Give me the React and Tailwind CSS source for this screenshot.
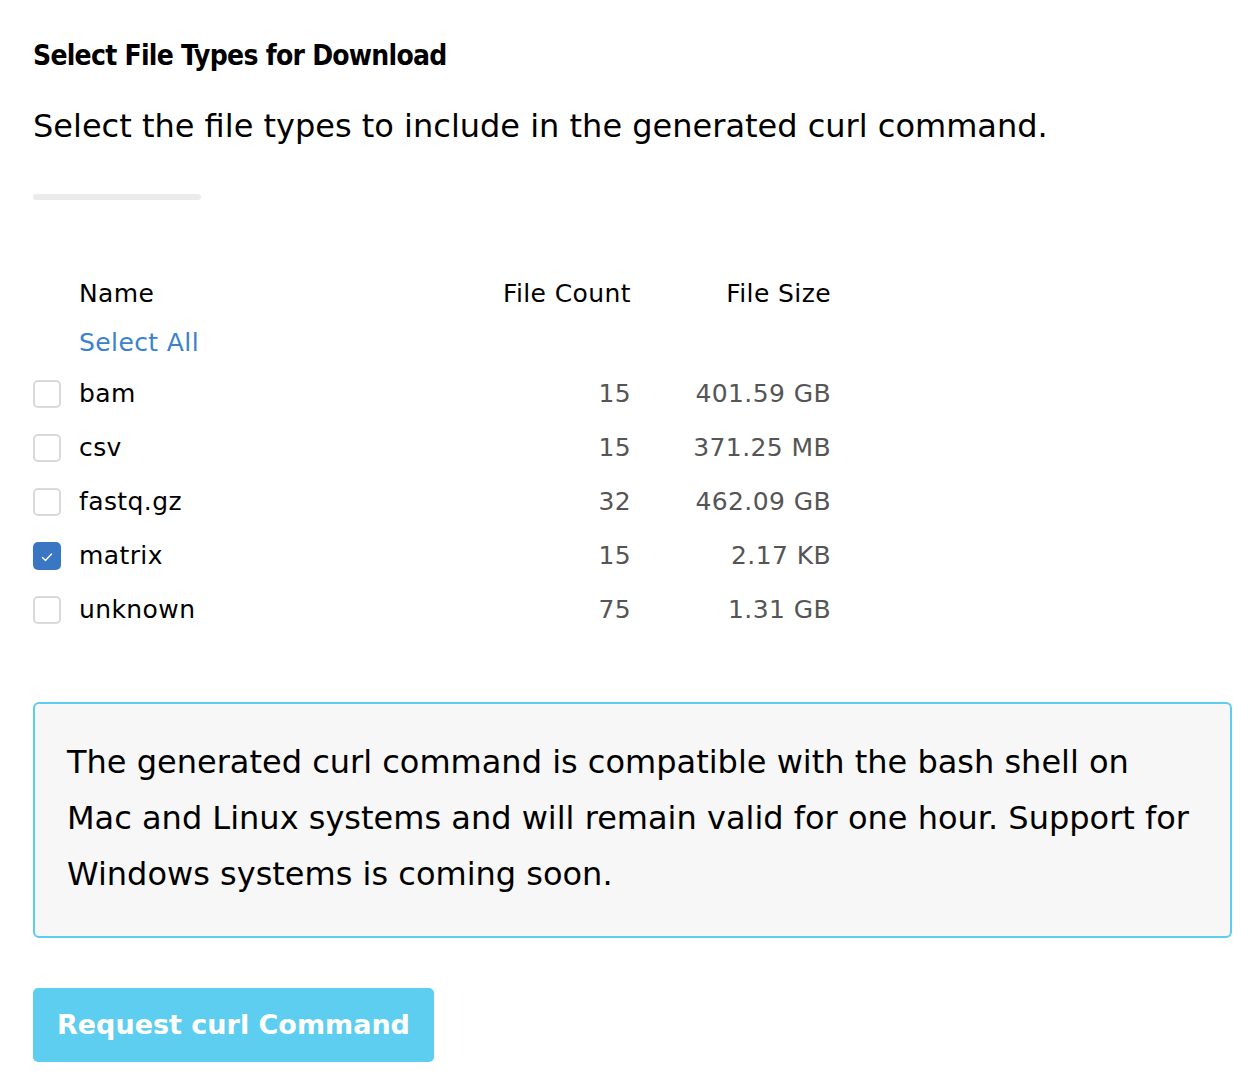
import React from 'react';

const rows = [
  { name: 'bam', count: 15, size: '401.59 GB', checked: false },
  { name: 'csv', count: 15, size: '371.25 MB', checked: false },
  { name: 'fastq.gz', count: 32, size: '462.09 GB', checked: false },
  { name: 'matrix', count: 15, size: '2.17 KB', checked: true },
  { name: 'unknown', count: 75, size: '1.31 GB', checked: false },
];

const Checkbox = ({ checked }) =>
  checked ? (
    <span className="flex h-[28px] w-[28px] items-center justify-center rounded-[5px] bg-[#3a77c2]">
      <svg width="18" height="18" viewBox="0 0 18 18" fill="none">
        <path d="M4.5 10.5l3 3L13.5 7" stroke="#fff" strokeWidth="1.4" strokeLinecap="round" strokeLinejoin="round" />
      </svg>
    </span>
  ) : (
    <span className="block h-[28px] w-[28px] rounded-[5px] border-2 border-[#d9d9d9] bg-white" />
  );

export default function App() {
  return (
    <div className="min-h-screen bg-white pl-[33px] pr-[16px] pt-[36px] font-['DejaVu_Sans',sans-serif] text-black">
      <h1 className="font-['DejaVu_Sans_Condensed',sans-serif] text-[28px] font-bold leading-[40px] tracking-[-0.75px]">
        Select File Types for Download
      </h1>
      <p className="mt-[30px] text-[32px] leading-[40px]">
        Select the file types to include in the generated curl command.
      </p>
      <div className="mt-[48px] h-[6px] w-[168px] rounded-full bg-[#ebebeb]" />

      <div className="mt-[69px] w-[798px] text-[25px] tracking-[0.4px]">
        <div className="grid h-[50px] grid-cols-[46px_1fr_170px_200px] items-center">
          <span />
          <span>Name</span>
          <span className="text-right">File Count</span>
          <span className="text-right">File Size</span>
        </div>
        <div className="grid h-[48px] grid-cols-[46px_1fr] items-center">
          <span />
          <span className="text-[#3b82ce]">Select All</span>
        </div>
        {rows.map((r) => (
          <div key={r.name} className="grid h-[54px] grid-cols-[46px_1fr_170px_200px] items-center">
            <Checkbox checked={r.checked} />
            <span>{r.name}</span>
            <span className="text-right text-[#555]">{r.count}</span>
            <span className="text-right text-[#555]">{r.size}</span>
          </div>
        ))}
      </div>

      <div className="mt-[65px] rounded-[6px] border-2 border-[#5bcdf0] bg-[#f7f7f7] px-[32px] pb-[34px] pt-[30px] text-[32px] leading-[56px]">
        The generated curl command is compatible with the bash shell on
        <br />
        Mac and Linux systems and will remain valid for one hour. Support for
        <br />
        Windows systems is coming soon.
      </div>

      <button className="mt-[50px] h-[74px] rounded-[5px] bg-[#5ecef0] px-[24px] text-[27px] font-bold text-white">
        Request curl Command
      </button>
    </div>
  );
}
